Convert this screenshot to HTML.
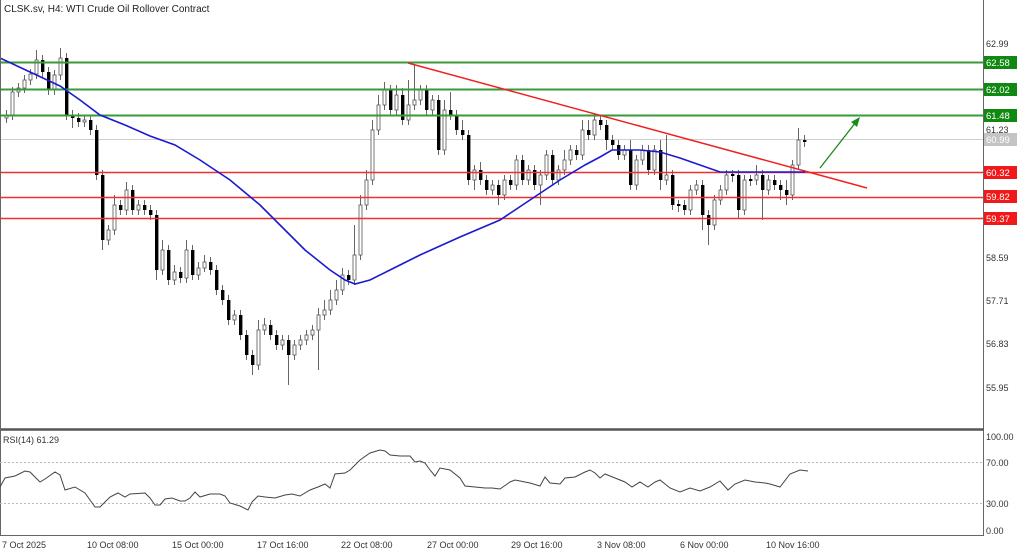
<!DOCTYPE html>
<html><head><meta charset="utf-8"><style>
html,body{margin:0;padding:0;background:#fff;width:1024px;height:553px;overflow:hidden}
svg{display:block;font-family:"Liberation Sans",sans-serif}
.b{fill:#fff;stroke:#555;stroke-width:0.8}
.s{fill:#000}
</style></head><body>
<svg width="1024" height="553" viewBox="0 0 1024 553" xmlns="http://www.w3.org/2000/svg">
<rect width="1024" height="553" fill="#fff"/>
<line x1="0" y1="139.5" x2="983" y2="139.5" stroke="#d0d0d0" stroke-width="1"/>
<g stroke="#666" stroke-width="1">
<path d="M6.5 110V123M12.5 87V120M18.5 83V97M24.5 75V93M30.5 69V85M36.5 50V79M42.5 55V77M48.5 67V95M54.5 70V95M60.5 48V80M66.5 53V120M72.5 110V128M78.5 113V127M84.5 115V127M90.5 115V135M96.5 125V180M102.5 170V250M108.5 225V245M114.5 195V235M120.5 200V215M126.5 182V215M132.5 185V215M138.5 200V215M144.5 200V215M150.5 205V220M156.5 210V280M162.5 240V275M168.5 245V285M174.5 265V285M180.5 267V283M186.5 240V283M192.5 245V280M198.5 262V280M204.5 255V272M210.5 257V275M216.5 265V295M222.5 285V305M228.5 295V325M234.5 310V325M240.5 310V340M246.5 330V360M252.5 350V375M258.5 320V370M264.5 318V335M270.5 320V340M276.5 330V350M282.5 335V350M288.5 335V385M294.5 340V360M300.5 335V350M306.5 330V345M312.5 325V340M318.5 308V370M324.5 300V320M330.5 290V315M336.5 280V305M342.5 268V295M348.5 270V285M354.5 225V285M360.5 195V260M366.5 170V210M372.5 120V185M378.5 95V135M384.5 82V110M390.5 85V115M396.5 85V115M402.5 88V125M408.5 80V125M414.5 65V110M420.5 85V105M426.5 85V115M432.5 95V115M438.5 95V155M444.5 100V155M450.5 92V120M456.5 110V135M462.5 120V140M468.5 130V185M474.5 165V190M480.5 162V185M486.5 175V195M492.5 180V195M498.5 180V205M504.5 175V200M510.5 175V190M516.5 155V190M522.5 155V185M528.5 165V185M534.5 165V190M540.5 170V205M546.5 150V180M552.5 150V185M558.5 165V185M564.5 150V175M570.5 145V165M576.5 145V160M582.5 120V160M588.5 120V140M594.5 115V140M600.5 115V130M606.5 120V150M612.5 135V150M618.5 140V160M624.5 145V160M630.5 140V190M636.5 155V190M642.5 145V165M648.5 145V175M654.5 145V175M660.5 140V190M666.5 135V185M672.5 170V210M678.5 200V212M684.5 200V215M690.5 185V215M696.5 180V195M702.5 180V230M708.5 210V245M714.5 195V230M720.5 185V205M726.5 170V195M732.5 170V182M738.5 170V218M744.5 175V215M750.5 175V186M756.5 165V185M762.5 170V220M768.5 175V195M774.5 175V190M780.5 180V200M786.5 180V205M792.5 160V200M798.5 128V170M804.5 135V147"/>
</g>
<g>
<rect class="b" x="5" y="115" width="3" height="3"/><rect class="b" x="11" y="92" width="3" height="23"/><rect class="b" x="17" y="88" width="3" height="4"/><rect class="b" x="23" y="80" width="3" height="8"/><rect class="b" x="29" y="74" width="3" height="6"/><rect class="b" x="35" y="60" width="3" height="14"/><rect class="s" x="41" y="60" width="3.4" height="12"/><rect class="s" x="47" y="72" width="3.4" height="18"/><rect class="b" x="53" y="75" width="3" height="15"/><rect class="b" x="59" y="58" width="3" height="17"/><rect class="s" x="65" y="58" width="3.4" height="57"/><rect class="s" x="71" y="115" width="3.4" height="3"/><rect class="s" x="77" y="118" width="3.4" height="4"/><rect class="b" x="83" y="120" width="3" height="2"/><rect class="s" x="89" y="120" width="3.4" height="10"/><rect class="s" x="95" y="130" width="3.4" height="45"/><rect class="s" x="101" y="175" width="3.4" height="65"/><rect class="b" x="107" y="230" width="3" height="10"/><rect class="b" x="113" y="205" width="3" height="25"/><rect class="s" x="119" y="205" width="3.4" height="5"/><rect class="b" x="125" y="190" width="3" height="20"/><rect class="s" x="131" y="190" width="3.4" height="20"/><rect class="b" x="137" y="205" width="3" height="5"/><rect class="s" x="143" y="205" width="3.4" height="5"/><rect class="s" x="149" y="210" width="3.4" height="5"/><rect class="s" x="155" y="215" width="3.4" height="55"/><rect class="b" x="161" y="250" width="3" height="20"/><rect class="s" x="167" y="250" width="3.4" height="30"/><rect class="b" x="173" y="272" width="3" height="8"/><rect class="s" x="179" y="272" width="3.4" height="6"/><rect class="b" x="185" y="250" width="3" height="28"/><rect class="s" x="191" y="250" width="3.4" height="25"/><rect class="b" x="197" y="268" width="3" height="7"/><rect class="b" x="203" y="262" width="3" height="6"/><rect class="s" x="209" y="262" width="3.4" height="8"/><rect class="s" x="215" y="270" width="3.4" height="20"/><rect class="s" x="221" y="290" width="3.4" height="10"/><rect class="s" x="227" y="300" width="3.4" height="20"/><rect class="b" x="233" y="315" width="3" height="5"/><rect class="s" x="239" y="315" width="3.4" height="20"/><rect class="s" x="245" y="335" width="3.4" height="20"/><rect class="s" x="251" y="355" width="3.4" height="10"/><rect class="b" x="257" y="330" width="3" height="35"/><rect class="b" x="263" y="325" width="3" height="5"/><rect class="s" x="269" y="325" width="3.4" height="10"/><rect class="s" x="275" y="335" width="3.4" height="10"/><rect class="b" x="281" y="340" width="3" height="5"/><rect class="s" x="287" y="340" width="3.4" height="15"/><rect class="b" x="293" y="345" width="3" height="10"/><rect class="b" x="299" y="340" width="3" height="5"/><rect class="b" x="305" y="335" width="3" height="5"/><rect class="b" x="311" y="330" width="3" height="5"/><rect class="b" x="317" y="315" width="3" height="15"/><rect class="b" x="323" y="310" width="3" height="5"/><rect class="b" x="329" y="300" width="3" height="10"/><rect class="b" x="335" y="290" width="3" height="10"/><rect class="b" x="341" y="275" width="3" height="15"/><rect class="s" x="347" y="275" width="3.4" height="5"/><rect class="b" x="353" y="255" width="3" height="25"/><rect class="b" x="359" y="205" width="3" height="50"/><rect class="b" x="365" y="180" width="3" height="25"/><rect class="b" x="371" y="130" width="3" height="50"/><rect class="b" x="377" y="105" width="3" height="25"/><rect class="b" x="383" y="90" width="3" height="15"/><rect class="s" x="389" y="90" width="3.4" height="20"/><rect class="b" x="395" y="95" width="3" height="15"/><rect class="s" x="401" y="95" width="3.4" height="25"/><rect class="b" x="407" y="105" width="3" height="15"/><rect class="b" x="413" y="100" width="3" height="5"/><rect class="b" x="419" y="90" width="3" height="10"/><rect class="s" x="425" y="90" width="3.4" height="20"/><rect class="b" x="431" y="100" width="3" height="10"/><rect class="s" x="437" y="100" width="3.4" height="50"/><rect class="b" x="443" y="110" width="3" height="40"/><rect class="s" x="449" y="110" width="3.4" height="5"/><rect class="s" x="455" y="115" width="3.4" height="15"/><rect class="s" x="461" y="130" width="3.4" height="5"/><rect class="s" x="467" y="135" width="3.4" height="45"/><rect class="b" x="473" y="170" width="3" height="10"/><rect class="s" x="479" y="170" width="3.4" height="10"/><rect class="s" x="485" y="180" width="3.4" height="10"/><rect class="b" x="491" y="185" width="3" height="5"/><rect class="s" x="497" y="185" width="3.4" height="10"/><rect class="b" x="503" y="180" width="3" height="15"/><rect class="s" x="509" y="180" width="3.4" height="5"/><rect class="b" x="515" y="160" width="3" height="25"/><rect class="s" x="521" y="160" width="3.4" height="20"/><rect class="b" x="527" y="170" width="3" height="10"/><rect class="s" x="533" y="170" width="3.4" height="15"/><rect class="b" x="539" y="175" width="3" height="10"/><rect class="b" x="545" y="155" width="3" height="20"/><rect class="s" x="551" y="155" width="3.4" height="25"/><rect class="b" x="557" y="170" width="3" height="10"/><rect class="b" x="563" y="160" width="3" height="10"/><rect class="b" x="569" y="150" width="3" height="10"/><rect class="s" x="575" y="150" width="3.4" height="5"/><rect class="b" x="581" y="130" width="3" height="25"/><rect class="s" x="587" y="130" width="3.4" height="5"/><rect class="b" x="593" y="120" width="3" height="15"/><rect class="s" x="599" y="120" width="3.4" height="5"/><rect class="s" x="605" y="125" width="3.4" height="15"/><rect class="s" x="611" y="140" width="3.4" height="5"/><rect class="s" x="617" y="145" width="3.4" height="10"/><rect class="b" x="623" y="150" width="3" height="5"/><rect class="s" x="629" y="150" width="3.4" height="35"/><rect class="b" x="635" y="160" width="3" height="25"/><rect class="b" x="641" y="150" width="3" height="10"/><rect class="s" x="647" y="150" width="3.4" height="20"/><rect class="b" x="653" y="150" width="3" height="20"/><rect class="s" x="659" y="150" width="3.4" height="30"/><rect class="b" x="665" y="175" width="3" height="5"/><rect class="s" x="671" y="175" width="3.4" height="30"/><rect class="s" x="677" y="204" width="3.4" height="2"/><rect class="s" x="683" y="205" width="3.4" height="5"/><rect class="b" x="689" y="190" width="3" height="20"/><rect class="b" x="695" y="185" width="3" height="5"/><rect class="s" x="701" y="185" width="3.4" height="30"/><rect class="s" x="707" y="215" width="3.4" height="10"/><rect class="b" x="713" y="200" width="3" height="25"/><rect class="b" x="719" y="190" width="3" height="10"/><rect class="b" x="725" y="175" width="3" height="15"/><rect class="s" x="731" y="174" width="3.4" height="2"/><rect class="s" x="737" y="175" width="3.4" height="35"/><rect class="b" x="743" y="180" width="3" height="30"/><rect class="s" x="749" y="179" width="3.4" height="2"/><rect class="b" x="755" y="175" width="3" height="5"/><rect class="s" x="761" y="175" width="3.4" height="15"/><rect class="b" x="767" y="180" width="3" height="10"/><rect class="s" x="773" y="180" width="3.4" height="5"/><rect class="s" x="779" y="185" width="3.4" height="5"/><rect class="s" x="785" y="190" width="3.4" height="5"/><rect class="b" x="791" y="165" width="3" height="30"/><rect class="b" x="797" y="140" width="3" height="25"/><rect class="s" x="803" y="140" width="3.4" height="2"/>
</g>
<g stroke="#3a9a3a" stroke-width="2">
<line x1="0" y1="62.5" x2="983" y2="62.5"/><line x1="0" y1="89.5" x2="983" y2="89.5"/><line x1="0" y1="115.5" x2="983" y2="115.5"/></g>
<g stroke="#f03030" stroke-width="1.6">
<line x1="0" y1="172.5" x2="983" y2="172.5"/><line x1="0" y1="197.5" x2="983" y2="197.5"/><line x1="0" y1="218.5" x2="983" y2="218.5"/></g>
<line x1="408" y1="63" x2="867" y2="188" stroke="#f02020" stroke-width="1.5"/>
<polyline fill="none" stroke="#1a1ad0" stroke-width="1.6" points="0,58 30,72 60,86 80,100 100,115 125,125 150,136 175,145 200,160 230,180 260,205 285,230 305,250 330,270 345,280 355,284 370,280 390,270 420,255 460,237 500,220 530,200 560,180 585,165 600,157 612,150 640,150 660,152 680,158 700,165 720,172 760,172 790,172 805,172"/>
<line x1="820" y1="168" x2="856" y2="122" stroke="#1a8a1a" stroke-width="1.3"/>
<polygon points="860,117 851,122 857,127" fill="#1a8a1a"/>
<text x="4" y="12" font-size="10" fill="#222">CLSK.sv, H4:  WTI Crude Oil Rollover Contract</text>
<line x1="983.5" y1="0" x2="983.5" y2="536" stroke="#666"/>
<line x1="0" y1="429.5" x2="984" y2="429.5" stroke="#555" stroke-width="2.5"/>
<line x1="0.5" y1="0" x2="0.5" y2="536" stroke="#666"/>
<line x1="0" y1="535.5" x2="984" y2="535.5" stroke="#666"/>
<g font-size="9" fill="#333">
<text x="986" y="47">62.99</text><text x="986" y="133">61.23</text>
<text x="986" y="261">58.59</text><text x="986" y="304">57.71</text>
<text x="986" y="347">56.83</text><text x="986" y="391">55.95</text>
<text x="986" y="440">100.00</text><text x="986" y="466">70.00</text>
<text x="986" y="507">30.00</text><text x="986" y="534">0.00</text>
</g>
<g font-size="9.5" fill="#fff">
<rect x="984" y="56" width="33" height="13" fill="#118811"/><text x="986" y="66">62.58</text>
<rect x="984" y="83" width="33" height="13" fill="#118811"/><text x="986" y="93">62.02</text>
<rect x="984" y="109" width="33" height="13" fill="#118811"/><text x="986" y="119">61.48</text>
<rect x="984" y="133" width="33" height="13" fill="#c4c4c4"/><text x="986" y="143">60.99</text>
<rect x="984" y="166" width="33" height="13" fill="#f01818"/><text x="986" y="176">60.32</text>
<rect x="984" y="190" width="33" height="13" fill="#f01818"/><text x="986" y="200">59.82</text>
<rect x="984" y="212" width="33" height="13" fill="#f01818"/><text x="986" y="222">59.37</text>
</g>
<line x1="0" y1="462.5" x2="983" y2="462.5" stroke="#bbb" stroke-dasharray="2,2"/>
<line x1="0" y1="503.5" x2="983" y2="503.5" stroke="#bbb" stroke-dasharray="2,2"/>
<text x="3" y="443" font-size="9" fill="#333">RSI(14) 61.29</text>
<polyline fill="none" stroke="#444" stroke-width="1" points="0,487 5,478 15,476 25,471 30,472 40,482 45,479 55,472 60,475 65,490 75,487 85,493 95,507 100,507 110,497 118,493 125,497 130,494 145,493 150,498 155,505 160,505 165,499 172,498 180,501 185,501 190,498 195,492 200,497 210,494 220,494 225,496 230,503 240,506 248,510 252,502 258,496 265,497 275,498 285,495 292,494 300,496 310,490 318,487 325,484 330,488 335,474 345,473 350,470 360,460 370,453 380,450 385,451 390,455 400,456 410,456 415,462 420,461 425,463 430,470 435,476 440,468 450,470 460,478 465,486 475,487 485,488 492,488 500,489 510,482 515,480 520,481 530,483 540,486 545,477 550,483 560,484 565,478 575,477 585,472 590,470 595,473 600,478 605,474 615,478 625,482 632,487 640,482 648,487 655,482 660,480 670,488 680,492 690,488 700,491 710,487 720,481 728,490 735,484 745,480 755,482 765,483 770,484 780,487 790,474 800,470 808,471"/>
<g font-size="9" fill="#333">
<text x="2" y="548">7 Oct 2025</text><text x="87" y="548">10 Oct 08:00</text>
<text x="172" y="548">15 Oct 00:00</text><text x="257" y="548">17 Oct 16:00</text>
<text x="341" y="548">22 Oct 08:00</text><text x="427" y="548">27 Oct 00:00</text>
<text x="511" y="548">29 Oct 16:00</text><text x="597" y="548">3 Nov 08:00</text>
<text x="680" y="548">6 Nov 00:00</text><text x="766" y="548">10 Nov 16:00</text>
</g>
</svg>
</body></html>
